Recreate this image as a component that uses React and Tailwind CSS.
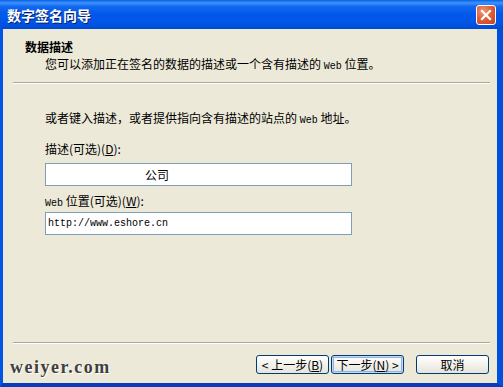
import React from 'react';

const Sep = () => (
    <div className="ml-[10px] mr-[7px]">
        <div className="h-px bg-[#aca899]" />
        <div className="h-px bg-white" />
    </div>
);

const Mono = ({ children }) => (
    <span className="font-['Liberation_Mono',monospace] text-[10px] leading-none">{children}</span>
);

const Row = ({ className, children }) => (
    <div className={"h-[14px] leading-[14px] whitespace-nowrap " + className}>{children}</div>
);

const Btn = ({ children, focused }) => (
    <div
        className={
            "w-[73px] h-[19px] flex items-center justify-center rounded-[3px] border border-[#003c74] bg-gradient-to-b from-white to-[#e6e4da] text-[12px] text-black leading-none " +
            (focused ? "shadow-[inset_0_0_0_1px_#c2d8f7,inset_0_0_0_2px_#8fb2ec]" : "")
        }
    >
        {children}
    </div>
);

export default function App() {
    return (
        <div className="w-[503px] h-[387px] flex flex-col font-['Noto_Sans_CJK_SC',sans-serif] text-black">
            {/* title bar */}
            <div className="h-[29px] flex items-center justify-between pl-[7px] pr-[7px] bg-[linear-gradient(to_bottom,#0a5fe8_0%,#3d93fb_10%,#1368f0_22%,#0058ea_50%,#0055e5_80%,#0049d2_100%)]">
                <span className="text-white font-bold text-[14px] leading-none [text-shadow:1px_1px_0_#0a1f6b]">数字签名向导</span>
                <div className="w-[20px] h-[20px] rounded-[3px] border border-white bg-[radial-gradient(circle_at_35%_30%,#f09a7a_0%,#e0603a_45%,#c2411c_100%)] flex items-center justify-center">
                    <svg width="12" height="12" viewBox="0 0 12 12">
                        <path d="M2 2 L10 10 M10 2 L2 10" stroke="white" strokeWidth="2.2" strokeLinecap="square" />
                    </svg>
                </div>
            </div>

            {/* body */}
            <div className="flex-1 flex flex-col bg-[#ece9d8] border-l-[3px] border-r-[6px] border-b-[4px] border-l-[#0055e5] border-r-[#0050dd] border-b-[#0a3cb8] text-[12px] leading-[14px]">
                <Row className="mt-[11px] pl-[22px] font-bold">数据描述</Row>
                <Row className="pl-[42px] mt-[3px]">您可以添加正在签名的数据的描述或一个含有描述的 <Mono>Web</Mono> 位置。</Row>
                <div className="mt-[11px]"><Sep /></div>

                <Row className="pl-[42px] mt-[27px]">或者键入描述，或者提供指向含有描述的站点的 <Mono>Web</Mono> 地址。</Row>

                <Row className="pl-[42px] mt-[17px]">描述(可选)(<u>D</u>):</Row>
                <div className="ml-[42px] mt-[7px] w-[307px] h-[23px] border border-[#7f9db9] bg-white flex items-center pl-[99px]">公司</div>

                <Row className="pl-[42px] mt-[8px]"><Mono>Web</Mono> 位置(可选)(<u>W</u>):</Row>
                <div className="ml-[42px] mt-[4px] w-[307px] h-[23px] border border-[#7f9db9] bg-white flex items-center pl-[2px]">
                    <span className="font-['Liberation_Mono',monospace] text-[10px]">http://www.eshore.cn</span>
                </div>

                <div className="flex-1" />
                <Sep />

                <div className="h-[39px] flex items-start justify-between pl-[7px] pr-[8px]">
                    <span className="mt-[14px] font-['Liberation_Serif',serif] font-bold text-[18px] leading-[18px] tracking-[1.5px] text-[#3f3f3f] [text-shadow:1px_1px_0_#ffffff]">weiyer.com</span>
                    <div className="mt-[11px] flex items-center">
                        <Btn>&lt; 上一步(<u>B</u>)</Btn>
                        <div className="ml-[2px]"><Btn focused>下一步(<u>N</u>) &gt;</Btn></div>
                        <div className="ml-[12px]"><Btn>取消</Btn></div>
                    </div>
                </div>
            </div>
        </div>
    );
}
